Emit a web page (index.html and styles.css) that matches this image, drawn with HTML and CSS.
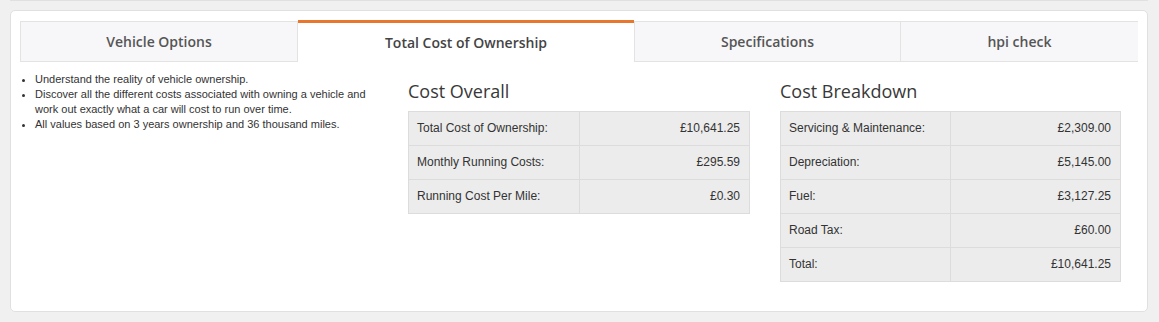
FILE: index.html
```html
<!DOCTYPE html>
<html lang="en">
<head>
<meta charset="utf-8">
<title>Total Cost of Ownership</title>
<link rel="stylesheet" href="styles.css">
</head>
<body>
<div class="prev-card"></div>
<div class="card">
  <div class="tabs">
    <div class="tab tab-options">Vehicle Options</div>
    <div class="tab tab-tco active">Total Cost of Ownership</div>
    <div class="tab tab-specs">Specifications</div>
    <div class="tab tab-hpi">hpi check</div>
  </div>
  <div class="content">
    <div class="col col-intro">
      <ul class="intro-list">
        <li>Understand the reality of vehicle ownership.</li>
        <li>Discover all the different costs associated with owning a vehicle and work out exactly what a car will cost to run over time.</li>
        <li>All values based on 3 years ownership and 36 thousand miles.</li>
      </ul>
    </div>
    <div class="col col-overall">
      <h3 class="section-title">Cost Overall</h3>
      <table class="cost-table">
        <tr><td>Total Cost of Ownership:</td><td class="num">£10,641.25</td></tr>
        <tr><td>Monthly Running Costs:</td><td class="num">£295.59</td></tr>
        <tr><td>Running Cost Per Mile:</td><td class="num">£0.30</td></tr>
      </table>
    </div>
    <div class="col col-breakdown">
      <h3 class="section-title">Cost Breakdown</h3>
      <table class="cost-table">
        <tr><td>Servicing &amp; Maintenance:</td><td class="num">£2,309.00</td></tr>
        <tr><td>Depreciation:</td><td class="num">£5,145.00</td></tr>
        <tr><td>Fuel:</td><td class="num">£3,127.25</td></tr>
        <tr><td>Road Tax:</td><td class="num">£60.00</td></tr>
        <tr><td>Total:</td><td class="num">£10,641.25</td></tr>
      </table>
    </div>
  </div>
</div>
</body>
</html>
```
FILE: styles.css
```css
* { box-sizing: border-box; }

html, body {
  margin: 0;
  padding: 0;
  background: #f0f0f0;
  font-family: "Liberation Sans", Arial, Helvetica, sans-serif;
  color: #333;
}

.prev-card {
  height: 1px;
  margin: 0 11px 0 10px;
  border: 1px solid #e0e0e0;
  border-top: 0;
  border-radius: 0 0 5px 5px;
  background: #fff;
}

.card {
  margin: 9px 11px 0 10px;
  height: 302px;
  background: #fff;
  border: 1px solid #e0e0e0;
  border-radius: 5px;
  padding: 10px 9px 0 9px;
}

.tabs {
  display: flex;
  height: 41px;
}

.tab {
  font-family: "Open Sans", sans-serif;
  font-weight: 600;
  font-size: 14px;
  color: #555;
  background: #f7f7f9;
  border-top: 1px solid #e3e3e3;
  border-bottom: 1px solid #e3e3e3;
  display: flex;
  align-items: center;
  justify-content: center;
}

.tab-options { width: 278px; border-left: 1px solid #e3e3e3; border-right: 1px solid #e3e3e3; }
.tab-tco { width: 336px; }
.tab-specs { width: 267px; border-left: 1px solid #e3e3e3; border-right: 1px solid #e3e3e3; }
.tab-hpi { width: 237px; }

.tab.active {
  background: #fff;
  border-top: 3px solid #e8762d;
  border-bottom: 0;
  color: #444;
  margin-top: -1px;
  height: 42px;
}

.content {
  display: grid;
  grid-template-columns: 373px 372px 1fr;
}

.col-intro { padding-right: 8px; }
.col-overall { padding: 0 15px; }
.col-breakdown { padding: 0 17px 0 15px; }

.intro-list {
  margin: 10px 0 0 0;
  padding: 0 0 0 15px;
  font-size: 11px;
  line-height: 15px;
  color: #333;
}

.section-title {
  font-family: "Open Sans", sans-serif;
  font-weight: 400;
  font-size: 18px;
  line-height: 22px;
  color: #383838;
  margin: 18px 0 9px 0;
}

.cost-table {
  width: 100%;
  border-collapse: collapse;
  table-layout: fixed;
  background: #ececec;
  font-size: 12px;
  color: #333;
}

.cost-table td {
  border: 1px solid #dcdcdc;
  padding: 8px 9px 8px 8px;
  line-height: 17px;
}

.cost-table td.num {
  text-align: right;
}
```
